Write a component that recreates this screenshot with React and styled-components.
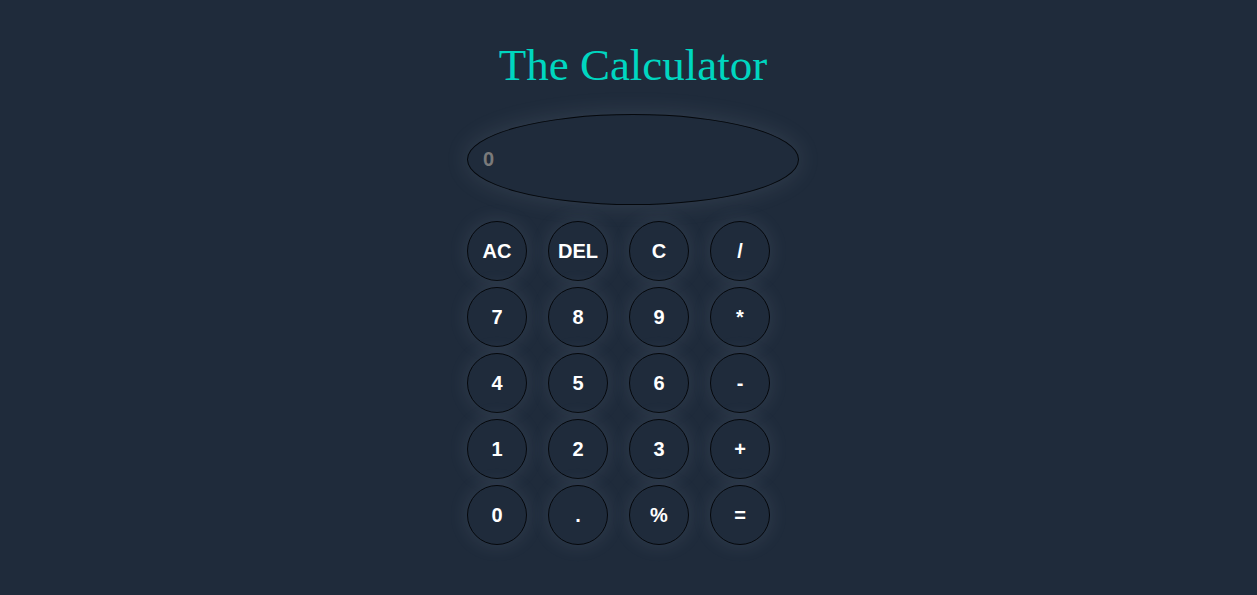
import React, { useState } from 'react';
import styled, { createGlobalStyle } from 'styled-components'

const GlobalStyle = createGlobalStyle`
    html, body {
        margin: 0;
        padding: 0;
        background: #1f2b3b;
        min-height: 100%;
    }
`

const Page = styled.div`
    display: flex;
    flex-direction: column;
    align-items: center;
    padding: 39px 0 0 9px;
    min-height: 595px;
    box-sizing: border-box;
    background: #1f2b3b;
`

const Title = styled.h1`
    margin: 0;
    font-family: 'Liberation Serif', 'Times New Roman', serif;
    font-weight: normal;
    font-size: 45px;
    line-height: 52px;
    color: #00d6c0;
`

const Calc = styled.div`
    width: 332px;
    margin-top: 23px;
    display: flex;
    flex-direction: column;
    gap: 16px;
`

const Screen = styled.div`
    width: 332px;
    height: 91px;
    box-sizing: border-box;
    border: 1px solid #05080c;
    border-radius: 50%;
    background: #1f2b3b;
    box-shadow: 0 0 24px rgba(190, 205, 220, 0.13);
    display: flex;
    align-items: center;
    padding-left: 15px;
    font-family: 'Liberation Sans', Arial, sans-serif;
    font-weight: bold;
    font-size: 20px;
    color: #7a7a7a;
`

const Keys = styled.div`
    display: grid;
    grid-template-columns: repeat(4, 60px);
    column-gap: 21px;
    row-gap: 6px;
`

const Key = styled.button`
    width: 60px;
    height: 60px;
    box-sizing: border-box;
    padding: 0;
    border: 1px solid #05080c;
    border-radius: 50%;
    background: #1f2b3b;
    box-shadow: 0 0 20px rgba(190, 205, 220, 0.12);
    font-family: 'Liberation Sans', Arial, sans-serif;
    font-weight: bold;
    font-size: 20px;
    color: #ffffff;
    cursor: pointer;
`

const keys = [
    "AC", "DEL", "C", "/",
    "7", "8", "9", "*",
    "4", "5", "6", "-",
    "1", "2", "3", "+",
    "0", ".", "%", "=",
]

const App = () => {
    const [value, setValue] = useState("0")

    const press = (k) => {
        if (k === "AC" || k === "C") return setValue("0")
        if (k === "DEL") return setValue(value.length > 1 ? value.slice(0, -1) : "0")
        if (k === "=") {
            try {
                // eslint-disable-next-line no-new-func
                setValue(String(Function("return (" + value.replace(/%/g, "/100") + ")")()))
            } catch (e) {
                setValue("0")
            }
            return
        }
        setValue(value === "0" ? k : value + k)
    }

    return <>
        <GlobalStyle />
        <Page>
            <Title>The Calculator</Title>
            <Calc>
                <Screen>{value}</Screen>
                <Keys>
                    {keys.map(k => <Key key={k} onClick={() => press(k)}>{k}</Key>)}
                </Keys>
            </Calc>
        </Page>
    </>
}

export default App
